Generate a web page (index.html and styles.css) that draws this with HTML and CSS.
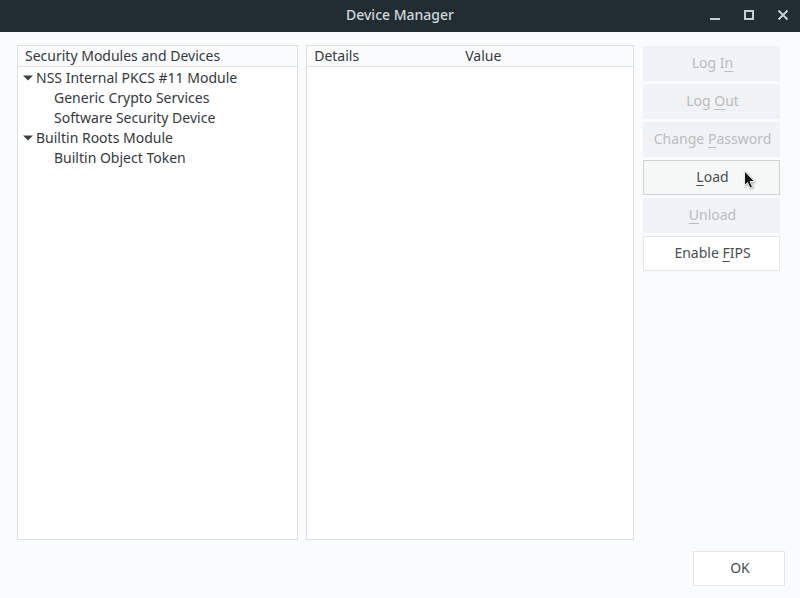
FILE: index.html
```html
<!DOCTYPE html>
<html lang="en">
<head>
<meta charset="utf-8">
<meta name="viewport" content="width=device-width, initial-scale=1">
<title>Device Manager</title>
<link rel="stylesheet" href="styles.css">
</head>
<body>
<header class="titlebar">
  <h1 class="title">Device Manager</h1>
  <div class="window-controls">
    <button class="window-button" type="button" aria-label="Minimize"><svg width="10" height="10" viewBox="0 0 10 10"><path d="M0 9h10" /></svg></button>
    <button class="window-button" type="button" aria-label="Maximize"><svg width="10" height="10" viewBox="0 0 10 10"><path d="M1 1h8v8H1z" /></svg></button>
    <button class="window-button" type="button" aria-label="Close"><svg width="10" height="10" viewBox="0 0 10 10"><path d="M.5.5l9 9M9.5.5l-9 9" /></svg></button>
  </div>
</header>
<main class="content">
  <section class="panel modules">
    <h2 class="panel-head">Security Modules and Devices</h2>
    <div class="tree">
      <details open>
        <summary><svg class="twisty" width="10" height="6" viewBox="0 0 10 6"><path d="M0 .5h10L5 5.5z" /></svg>NSS Internal PKCS #11 Module</summary>
        <ul>
          <li>Generic Crypto Services</li>
          <li>Software Security Device</li>
        </ul>
      </details>
      <details open>
        <summary><svg class="twisty" width="10" height="6" viewBox="0 0 10 6"><path d="M0 .5h10L5 5.5z" /></svg>Builtin Roots Module</summary>
        <ul>
          <li>Builtin Object Token</li>
        </ul>
      </details>
    </div>
  </section>
  <section class="panel info">
    <table class="info-table">
      <thead><tr><th class="details-col" scope="col">Details</th><th scope="col">Value</th></tr></thead>
    </table>
  </section>
  <div class="actions">
    <button class="button" type="button" disabled>Log I<u>n</u></button>
    <button class="button" type="button" disabled>Log <u>O</u>ut</button>
    <button class="button" type="button" disabled>Change <u>P</u>assword</button>
    <button class="button hovered" type="button"><u>L</u>oad
      <svg class="pointer" width="13" height="20" viewBox="0 0 13 20" aria-hidden="true"><path d="M1.500 1v14.500l3-3 2.500 5.500 2.500-1-2.500-5.500h4.500z" /></svg>
    </button>
    <button class="button" type="button" disabled><u>U</u>nload</button>
    <button class="button" type="button">Enable <u>F</u>IPS</button>
  </div>
</main>
<footer class="footer">
  <button class="button ok" type="button">OK</button>
</footer>
</body>
</html>
```
FILE: styles.css
```css
* { box-sizing: border-box; }

body {
  display: flex;
  flex-direction: column;
  min-height: 100vh;
  margin: 0;
  background: #fafbfd;
  color: #35393c;
  font: 14px/20px "Noto Sans", "Open Sans", sans-serif;
}

.titlebar {
  display: grid;
  grid-template-columns: 1fr auto 1fr;
  align-items: center;
  height: 32px;
  padding: 0 5px 2px;
  background: #222d32;
  color: #cfd8dc;
}

.title {
  grid-column: 2;
  margin: 0;
  font-size: 14px;
  font-weight: 500;
}

.window-controls {
  display: flex;
  justify-content: flex-end;
  gap: 10px;
}

.window-button {
  display: grid;
  place-items: center;
  width: 24px;
  height: 24px;
  padding: 0;
  border: 0;
  background: none;
}

.window-button svg {
  overflow: visible;
  fill: none;
  stroke: #c3cfd4;
  stroke-width: 2;
}

.content {
  display: flex;
  flex: 1;
  gap: 8px;
  padding: 13px 20px 0 17px;
}

.panel {
  border: 1px solid #dcdfe2;
  background: #fff;
}

.modules { flex: 281 1 0; }
.info { flex: 328 1 0; }

.panel-head,
.info-table th {
  height: 21px;
  margin: 0;
  padding: 0 7px;
  border-bottom: 1px solid #dfe2e5;
  background: #fafbfd;
  font-size: 14px;
  font-weight: 400;
  line-height: 20px;
  text-align: left;
}

.info-table {
  width: 100%;
  border-spacing: 0;
  table-layout: fixed;
}

.info-table .details-col { width: 151px; }

.tree { padding: 1px 5px; }

.tree summary {
  display: flex;
  align-items: center;
  gap: 3px;
  list-style: none;
}

.twisty { fill: #3c4245; }

.tree ul {
  margin: 0;
  padding: 0 0 0 31px;
  list-style: none;
}

.actions {
  display: flex;
  flex-direction: column;
  gap: 3px;
  width: 137px;
  padding-top: 1px;
  margin-left: 1px;
}

.button {
  position: relative;
  height: 35px;
  padding: 0 0 1px 2px;
  border: 1px solid #e4e7e9;
  background: #fff;
  color: #4a4e51;
  font: inherit;
}

.button:disabled {
  border-color: #f1f2f4;
  background: #f1f2f4;
  color: #babdbf;
}

.button u {
  text-decoration-thickness: 1px;
  text-underline-offset: 3px;
  text-decoration-skip-ink: none;
}

.hovered {
  border-color: #cfd2d3;
  background: #f6f8f8;
}

.pointer {
  position: absolute;
  top: 9px;
  right: 23px;
  fill: #111;
  stroke: #e8eaea;
  filter: drop-shadow(1px 1px 1px #aaa);
}

.footer {
  display: flex;
  justify-content: flex-end;
  padding: 11px 15px 12px;
}

.ok { width: 92px; }
```
